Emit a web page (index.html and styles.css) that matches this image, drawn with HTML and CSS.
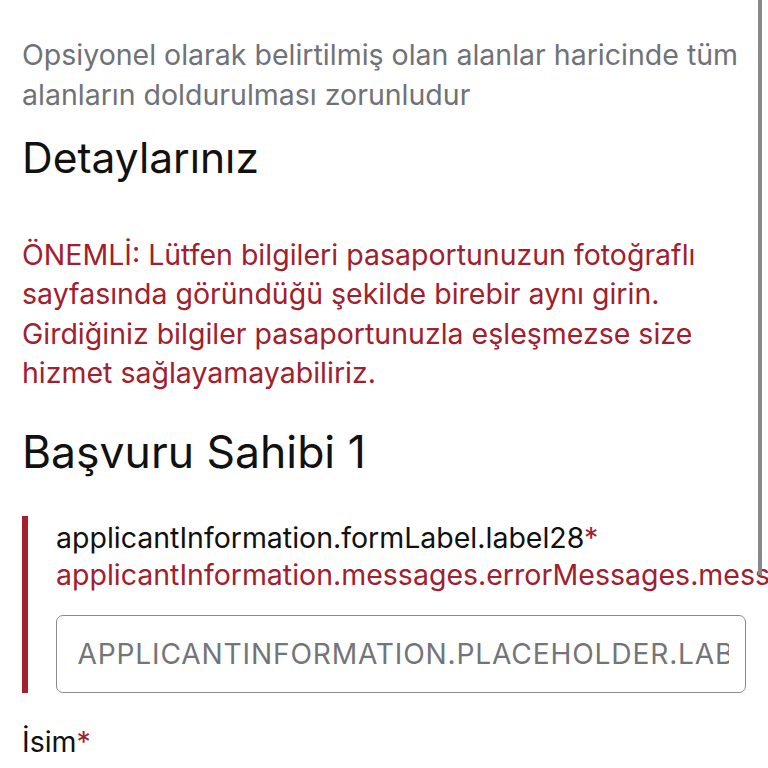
FILE: index.html
```html
<!DOCTYPE html>
<html lang="tr">
<head>
<meta charset="utf-8">
<link rel="stylesheet" href="styles.css">
</head>
<body>
<div class="page">
  <p class="hint">Opsiyonel olarak belirtilmiş olan alanlar haricinde tüm alanların doldurulması zorunludur</p>
  <h2 class="section-title">Detaylarınız</h2>
  <p class="important">ÖNEMLİ: Lütfen bilgileri pasaportunuzun fotoğraflı sayfasında göründüğü şekilde birebir aynı girin. Girdiğiniz bilgiler pasaportunuzla eşleşmezse size hizmet sağlayamayabiliriz.</p>
  <h2 class="applicant-title">Başvuru Sahibi 1</h2>
  <div class="field field-error">
    <div class="field-label">applicantInformation.formLabel.label28<span class="req">*</span></div>
    <div class="field-msg">applicantInformation.messages.errorMessages.message</div>
    <div class="input"><span class="placeholder">APPLICANTINFORMATION.PLACEHOLDER.LABEL28</span></div>
  </div>
  <div class="field-plain">
    <div class="field-label">İsim<span class="req">*</span></div>
  </div>
</div>
<div class="scrollbar"></div>
</body>
</html>
```
FILE: styles.css
```css
html, body {
  margin: 0;
  padding: 0;
  background: #ffffff;
  overflow: hidden;
}
body {
  font-family: Inter, "Noto Sans", sans-serif;
  color: #111111;
  width: 768px;
  height: 768px;
  position: relative;
}
.page {
  padding: 34.5px 0 0 22px;
  width: 746px;
  overflow: hidden;
}
.hint {
  margin: 0;
  font-size: 28.5px;
  line-height: 40px;
  color: #6f7278;
  width: 740px;
}
.section-title {
  margin: 17px 0 0 0;
  font-size: 42.5px;
  font-weight: 400;
  line-height: 52px;
  color: #111;
}
.important {
  margin: 51px 0 0 0;
  font-size: 28.5px;
  line-height: 39.5px;
  color: #a1202e;
  width: 740px;
}
.applicant-title {
  margin: 32px 0 0 0;
  font-size: 44.5px;
  font-weight: 400;
  line-height: 54px;
  color: #111;
}
.field {
  margin-top: 37px;
  border-left: 6px solid #a3202d;
  padding: 3.5px 0 0 28px;
  height: 177px;
  box-sizing: border-box;
  width: 746px;
  overflow: hidden;
}
.field-label {
  font-size: 28.5px;
  line-height: 37px;
  white-space: nowrap;
}
.req { color: #a1202e; }
.field-msg {
  font-size: 28.5px;
  line-height: 37px;
  color: #a1202e;
  white-space: nowrap;
}
.input {
  margin-top: 21.5px;
  width: 690px;
  height: 78px;
  box-sizing: border-box;
  border: 1.5px solid #8a8a8a;
  border-radius: 7px;
  padding: 0 16.5px 0 20.5px;
  display: flex;
  align-items: center;
}
.placeholder {
  flex: 1;
  min-width: 0;
  overflow: hidden;
  white-space: nowrap;
  font-size: 28.2px;
  letter-spacing: 0.8px;
  color: #737578;
}
.field-plain {
  margin-top: 30.5px;
}
.scrollbar {
  position: absolute;
  top: 0;
  left: 758px;
  width: 4px;
  height: 575px;
  background: #888888;
}
```
